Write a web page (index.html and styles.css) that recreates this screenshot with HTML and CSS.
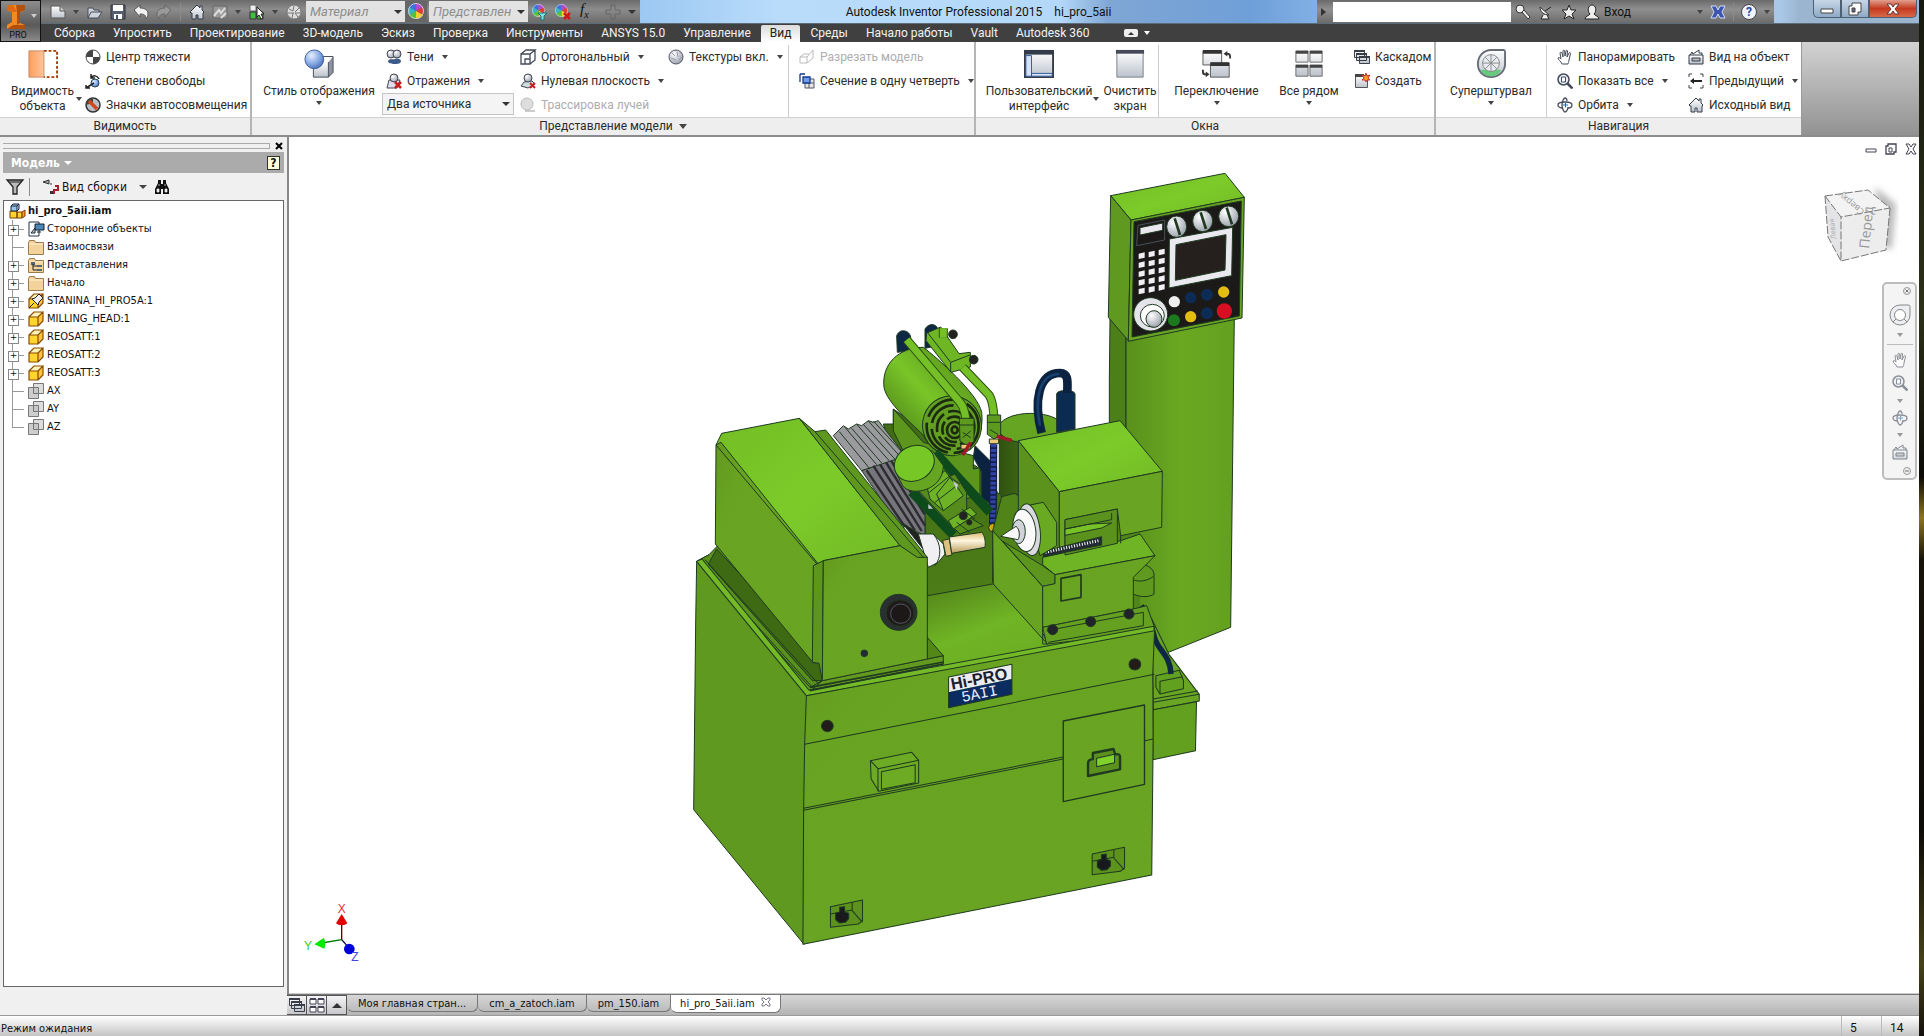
FILE: index.html
```html
<!DOCTYPE html>
<html lang="ru">
<head>
<meta charset="utf-8">
<title>Autodesk Inventor Professional 2015 - hi_pro_5aii</title>
<link rel="stylesheet" href="styles.css">
</head>
<body>
<svg class="defs" aria-hidden="true">
  <defs>
    <linearGradient id="steel" x1="0" y1="0" x2="0" y2="1"><stop offset="0" stop-color="#fff"/><stop offset="1" stop-color="#bcc2cc"/></linearGradient>
    <linearGradient id="orange"><stop offset="0" stop-color="#ff9d5c"/><stop offset="1" stop-color="#ffc59b"/></linearGradient>
    <radialGradient id="blueBall" cx=".35" cy=".3" r=".8"><stop offset="0" stop-color="#e4efff"/><stop offset=".6" stop-color="#7fa3e0"/><stop offset="1" stop-color="#3f66b0"/></radialGradient>
    <radialGradient id="greyBall" cx=".35" cy=".3" r=".8"><stop offset="0" stop-color="#fff"/><stop offset="1" stop-color="#9299a5"/></radialGradient>
    <symbol id="i-wheelcolor" viewBox="0 0 16 16"><path fill="#3d6fe0" d="M8 8 1 4A8 8 0 0 1 8 0z"/><path fill="#b04bd0" d="M8 8V0a8 8 0 0 1 7 4z"/><path fill="#e03a3a" d="m8 8 7-4a8 8 0 0 1 0 8z"/><path fill="#f2d22a" d="m8 8 7 4a8 8 0 0 1-7 4z"/><path fill="#54c23a" d="M8 8v8a8 8 0 0 1-7-4z"/><path fill="#35b7c9" d="m8 8-7 4a8 8 0 0 1 0-8z"/><circle cx="8" cy="8" r="7.500" fill="none" stroke="#ccc"/></symbol>
    <symbol id="i-house" viewBox="0 0 16 16"><path d="M1 8 8 1l3 3V2h2v4l2 2-1 1v6H9v-4H7v4H3V9H2z" fill="url(#steel)" stroke="#333a48"/></symbol>
    <symbol id="i-hand" viewBox="0 0 16 16"><path d="M5 15c-1-3-4-4-4-6 1-1 2 0 3 1L3 4c0-1 1.500-1 2 0l1 4V2c0-1 1.500-1 1.700 0L8 7l1-5c0-1 1.500-1 1.500 0L10 8l2-4c.5-1 1.700-.5 1.500.5L12 11c0 2-1 3-1 4z" fill="#fff" stroke="#444a57"/></symbol>
    <symbol id="i-lens" viewBox="0 0 16 16"><circle cx="6.500" cy="6.500" r="5.500" fill="#e9eef5" stroke="#444a57" stroke-width="1.500"/><path d="m10.500 10.500 5 5" stroke="#444a57" stroke-width="2.500"/><path d="M4.500 4h4v5h-4z" fill="#fff" stroke="#444a57"/></symbol>
    <symbol id="i-orbit" viewBox="0 0 16 16"><g fill="none" stroke="#444a57" stroke-width="1.300"><path d="M6 11c-3 0-5-1-5-3s3-3 7-3 7 1 7 3-2 3-4 3"/><path d="M10 4c0-2-1-3-2-3S5 4 5 8s2 7 3 7 3-2 3-5"/></g><path d="M6 8h5M8.500 5.500v5" stroke="#1f6fb5"/></symbol>
    <symbol id="i-lookat" viewBox="0 0 16 16"><path d="M1 6h14v9H1z" fill="url(#steel)" stroke="#333a48"/><path d="M4 9h8v3H4z" fill="#bbb" stroke="#333a48"/><path d="m2 6 2-3 1 2 6-4v3h3v2" fill="none" stroke="#333a48"/></symbol>
    <symbol id="i-cascade" viewBox="0 0 16 16"><g fill="url(#steel)" stroke="#3a3e48"><path d="M.5 1.500h10v7H.5zM2.500 4.500h10v7h-10zM5.500 7.500h10v7h-10z"/></g><path d="M0 1h11v2H0zM2 4h11v2H2zM5 7h11v2H5z" fill="#3a3e48"/></symbol>
    <symbol id="i-cube" viewBox="0 0 16 16"><path d="M1 6h9v9H1z" fill="#ffd52e"/><path d="m1 6 5-5h9l-5 5z" fill="#fff3b8"/><path d="m10 6 5-5v9l-5 5z" fill="#ffc23a"/><path d="M1 6h9v9H1zM1 6l5-5h9l-5 5M15 1v9l-5 5" fill="none" stroke="#8a4a00" stroke-width="1.200"/></symbol>
    <symbol id="i-folder" viewBox="0 0 16 16"><path d="M.5 15.500v-12l1-2h5l1 2h8v12z" fill="#f3d29b" stroke="#9b7a4c"/><path d="M1 5h14" stroke="#fff0d0"/></symbol>
    <symbol id="i-planes" viewBox="0 0 16 16"><path d="M5.500.5h10v10h-10z" fill="#ddd" stroke="#777"/><path d="M.5 4.500h10v11H.5z" fill="#c4c4c4" fill-opacity=".85" stroke="#777"/><path d="M5.500 4.500v6h5" fill="none" stroke="#777"/></symbol>
  </defs>
</svg>
<div class="desktop">
<div class="app">
  <header class="titlebar">
    <button class="appbtn" aria-label="Меню приложения">
      <svg class="logo" viewBox="0 0 20 26"><path fill="#f08a24" d="M1 1h18v5l-5 2v11l5 2v4H1v-4l5-3V8L1 6z"/><path fill="#b4500d" d="M10 1h9v5l-5 2v11l-3 2V8zM1 25l6-4 12 0v4z"/><path fill="#d96c13" d="M1 1h6l4 7H6L1 6z"/></svg>
      <span>PRO</span><i class="dn light"></i>
    </button>
    <div class="qat">
      <svg class="w16" viewBox="0 0 16 16"><path d="M1 2h9l5 5v7H1z" fill="url(#steel)" stroke="#555"/><path d="M10 2v5h5" fill="#ccc" stroke="#555"/></svg><i class="dn"></i>
      <svg class="w16" viewBox="0 0 16 16"><path d="M1 14V4h5l1 2h5v2M1 14l3-6h11l-4 6z" fill="#cfd3da" stroke="#444b58"/></svg>
      <svg class="w16" viewBox="0 0 16 16"><path d="M1 1h14v14H1z" fill="#566070" stroke="#333"/><path d="M3 1h10v6H3zM4 10h8v5H4z" fill="#fff"/><path d="M6 11h2v4H6z" fill="#456"/></svg>
      <svg class="w16" viewBox="0 0 16 16"><path d="m1 6 6-5v3c5 0 8 2 8 6 0 2-1 4-2 5 0-4-2-5-6-5v3z" fill="#f2f2f2" stroke="#555"/></svg>
      <svg class="w16" viewBox="0 0 16 16"><path d="M15 6 9 1v3c-5 0-8 2-8 6 0 2 1 4 2 5 0-4 2-5 6-5v3z" fill="#999" stroke="#666"/></svg>
      <b class="vs"></b>
      <svg class="w16"><use href="#i-house"/></svg>
      <svg class="w16" viewBox="0 0 16 16"><path d="M1 2h14v12H1z" fill="#999" stroke="#666"/><path d="m2 12 5-6 2 3 4-5M9 14l5-5" stroke="#ddd" stroke-width="2" fill="none"/></svg><i class="dn"></i>
      <svg class="w16" viewBox="0 0 16 16"><path d="M1 1h6v6H1z" fill="#eee" stroke="#666"/><path d="M1 8h6v7H1zM8 8h6v7H8z" fill="#3fbf3f" stroke="#333"/><path d="M8 3v10l2-2 2 4 2-1-2-4h3z" fill="#fff" stroke="#222"/></svg><i class="dn"></i>
      <svg class="w16" viewBox="0 0 16 16"><circle cx="8" cy="8" r="7" fill="#ddd" stroke="#777"/><path d="M3 5l4 2M8 2l-1 5M13 4l-4 4M2 9l6 0M6 14l1-5M12 13l-3-4M14 9H9" stroke="#777"/></svg>
      <label class="combo dim"><select aria-label="Материал"><option>Материал</option></select></label>
      <span class="wheelbox"><svg class="w16"><use href="#i-wheelcolor"/></svg></span>
      <label class="combo dim"><select aria-label="Представление"><option>Представлен</option></select></label>
      <svg class="w16" viewBox="0 0 16 16"><use href="#i-wheelcolor" width="13" height="13"/><path d="M6 9h9l-3 3v4H9v-4z" fill="#7fe0f5" stroke="#176"/></svg>
      <svg class="w16" viewBox="0 0 16 16"><use href="#i-wheelcolor" width="13" height="13"/><path d="m9 9 6 6m0-6-6 6" stroke="#d01818" stroke-width="2.500"/></svg>
      <span class="fx">f<sub>x</sub></span>
      <svg class="w16" viewBox="0 0 16 16"><path d="M6 1h4v5h5v4h-5v5H6v-5H1V6h5z" fill="none" stroke="#666"/></svg>
      <i class="dn over"></i>
    </div>
    <div class="caption"><span>Autodesk Inventor Professional 2015</span><span>hi_pro_5aii</span></div>
    <div class="infocenter">
      <i class="rt"></i><input class="search" type="text" aria-label="Поиск">
      <svg class="w16" viewBox="0 0 16 16"><circle cx="5" cy="5" r="4" fill="#eee" stroke="#333"/><path d="m7 8 6 7 2-2-6-7z" fill="#eee" stroke="#333"/></svg>
      <svg class="w16" viewBox="0 0 16 16"><path d="M2 3c0 5 4 8 9 8z" fill="#eee" stroke="#333"/><path d="m7 7 6-4M5 11l-2 4h8l-2-4" stroke="#222" fill="#eee"/></svg>
      <svg class="w16" viewBox="0 0 16 16"><path d="m8 1 2 5h5l-4 4 2 5-5-3-5 3 2-5-4-4h5z" fill="#eee" stroke="#222"/></svg>
      <svg class="w16" viewBox="0 0 16 16"><path d="M1 15c0-3 4-3 5-5-3-3-2-9 2-9s5 6 2 9c1 2 5 2 5 5z" fill="#eee" stroke="#222"/></svg>
      <a href="#" class="signin">Вход</a><i class="dn signdn"></i>
      <svg class="w16" viewBox="0 0 16 16"><path d="M1 2h5l2 4 2-4h5l-3 6 3 6h-5l-2-4-2 4H1l3-6z" fill="#3b55b0" stroke="#d5dcf5"/></svg>
      <b class="vs"></b>
      <button class="help" aria-label="Справка">?</button><i class="dn"></i>
    </div>
    <div class="winbtns"><button aria-label="Свернуть"><svg class="w16" viewBox="0 0 16 16"><path d="M2 8h12v4H2z" fill="#fff" stroke="#444"/></svg></button><button aria-label="Развернуть"><svg class="w16" viewBox="0 0 16 16"><path d="M5 2h9v9h-3v3H2V5h3z" fill="#fff" stroke="#444"/><path d="M5 7h3v4H5z" fill="#668" stroke="#444"/></svg></button><button class="close" aria-label="Закрыть"><svg class="w16" viewBox="0 0 16 16"><path d="M2 3h4l2 3 2-3h4l-4 5 4 5h-4l-2-3-2 3H2l4-5z" fill="#fff" stroke="#633"/></svg></button></div>
  </header>

  <nav class="tabs">
    <a href="#">Сборка</a><a href="#">Упростить</a><a href="#">Проектирование</a><a href="#">3D-модель</a><a href="#">Эскиз</a><a href="#">Проверка</a><a href="#">Инструменты</a><a href="#">ANSYS 15.0</a><a href="#">Управление</a><a href="#" class="on">Вид</a><a href="#">Среды</a><a href="#">Начало работы</a><a href="#">Vault</a><a href="#">Autodesk 360</a>
    <button class="mini" aria-label="Свернуть ленту"><i class="up"></i></button><i class="dn white"></i>
  </nav>

  <section class="ribbon">
    <div class="panel p1">
      <div class="tools">
        <button class="big"><svg class="w32" viewBox="0 0 32 32"><path d="M1 2h16v28H1z" fill="url(#orange)"/><path d="M1 2h16v28H1z" fill="none" stroke="#c98a63"/><path d="M17 2h14v28H17" fill="none" stroke="#a33b0c" stroke-width="2" stroke-dasharray="3 2"/></svg><span>Видимость<br>объекта</span><i class="dn side"></i></button>
        <div class="col">
          <button><svg class="w16" viewBox="0 0 16 16"><circle cx="8" cy="8" r="7" fill="#fff" stroke="#444"/><path d="M8 8V1a7 7 0 0 0-7 7zM8 8v7a7 7 0 0 0 7-7z" fill="#444"/></svg>Центр тяжести</button>
          <button><svg class="w16" viewBox="0 0 16 16"><circle cx="10" cy="10" r="4" fill="url(#blueBall)" stroke="#245"/><path d="M1 15l8-5M6 5c2-3 6-3 8 1M6 1v4h4M1 12v3h4" fill="none" stroke="#222" stroke-width="1.500"/></svg>Степени свободы</button>
          <button><svg class="w16" viewBox="0 0 16 16"><circle cx="8" cy="8" r="7" fill="#b9c0ca" stroke="#333" stroke-width="1.500"/><path d="M8 1a7 7 0 0 0-7 7l7-2z" fill="#444"/><path d="m4 4 8 8" stroke="#d1481a" stroke-width="3.500"/></svg>Значки автосовмещения</button>
        </div>
      </div>
      <h2>Видимость</h2>
    </div>

    <div class="panel p2">
      <div class="tools">
        <button class="big"><svg class="w32" viewBox="0 0 32 32"><path d="M10 14h16v16H10z" fill="url(#steel)"/><path d="m26 14 5-6v17l-5 5z" fill="#8d939f"/><path d="M10 14v16h16l5-5V8H20M26 14v16" fill="none" stroke="#444a57"/><circle cx="11" cy="11" r="10" fill="url(#blueBall)" stroke="#3a5a9a"/></svg><span>Стиль отображения</span><i class="dn"></i></button>
        <div class="col c2">
          <button><svg class="w16" viewBox="0 0 16 16"><circle cx="5" cy="5" r="4" fill="url(#greyBall)" stroke="#445"/><circle cx="11" cy="5" r="4" fill="url(#greyBall)" stroke="#445"/><path d="M2 12c2-3 5-1 7-2s6 0 6 2-2 3-5 3-8 0-8-3z" fill="#3b5a8a"/></svg>Тени<i class="dn"></i></button>
          <button><svg class="w16" viewBox="0 0 16 16"><path d="m3 7-2 8h10l3-8z" fill="#dde" stroke="#445"/><circle cx="8" cy="5" r="4" fill="url(#greyBall)" stroke="#445"/><path d="m9 9 6 6m0-6-6 6" stroke="#c81e1e" stroke-width="2.500"/></svg>Отражения<i class="dn"></i></button>
          <label class="combo lights"><select aria-label="Источники света"><option>Два источника</option></select></label>
        </div>
        <div class="col c3">
          <button><svg class="w16" viewBox="0 0 16 16"><path d="M1 5h9v10H1zM1 5l5-4h9l-5 4M15 1v10l-5 4M5 15v-5h5" fill="none" stroke="#444a57" stroke-width="1.300"/></svg>Ортогональный<i class="dn"></i></button>
          <button><svg class="w16" viewBox="0 0 16 16"><path d="m4 9-3 4 7 2 7-4-3-3z" fill="#cdd" stroke="#445"/><circle cx="8" cy="5" r="4" fill="url(#greyBall)" stroke="#445"/><path d="m10 10 5 5m0-5-5 5" stroke="#c81e1e" stroke-width="2"/></svg>Нулевая плоскость<i class="dn"></i></button>
          <button disabled><svg class="w16" viewBox="0 0 16 16"><path d="M5 13h10v2H5z" fill="#ccc"/><circle cx="7" cy="7" r="6" fill="#ddd" stroke="#bbb"/></svg>Трассировка лучей</button>
        </div>
        <div class="col">
          <button><svg class="w16" viewBox="0 0 16 16"><circle cx="8" cy="8" r="7" fill="url(#greyBall)" stroke="#556"/><path d="m4 4 3 3M9 3l1 5M3 9l5 2M11 11l2-3" stroke="#99a"/></svg>Текстуры вкл.<i class="dn"></i></button>
        </div>
        <div class="col c5">
          <button disabled><svg class="w16" viewBox="0 0 16 16"><path d="M1 8h7v6H1zM1 8l4-3h5M8 8l6-7v8l-6 5" fill="none" stroke="#bbb"/></svg>Разрезать модель</button>
          <button><svg class="w16" viewBox="0 0 16 16"><path d="M6 6h9v9H6zM10 6v9M6 10h9" fill="#e6e6e6" stroke="#556"/><path d="M1 1h5M1 1v8M4 4h7v6H4z" fill="#6f9be8" stroke="#133a8a" stroke-width="1.300"/></svg>Сечение в одну четверть<i class="dn"></i></button>
        </div>
      </div>
      <h2>Представление модели<i class="dn big-dn"></i></h2>
    </div>

    <div class="panel p3">
      <div class="tools">
        <button class="big"><svg class="w32" viewBox="0 0 32 32"><path d="M1 2h30v28H1z" fill="url(#steel)" stroke="#333a48" stroke-width="2"/><path d="M1 1h30v5H1z" fill="#333a48"/><path d="M2 7h6v22H2zM8 26h22v3H8z" fill="#d6e2f5" stroke="#2d5597"/></svg><span>Пользовательский<br>интерфейс</span><i class="dn side"></i></button>
        <button class="big"><svg class="w32" viewBox="0 0 32 32"><path d="M2 2h28v28H2z" fill="url(#steel)" stroke="#777d88"/><path d="M1 1h30v4H1z" fill="#444a57"/></svg><span>Очистить<br>экран</span></button>
        <button class="big sep"><svg class="w32" viewBox="0 0 32 32"><g fill="url(#steel)" stroke="#555"><path d="M1 2h20v15H1zM9 15h20v15H9z"/></g><path d="M1 1h20v4H1zM9 14h20v4H9zM23 5l4-3v2c4 0 4 3 4 6h-2c0-3 0-4-2-4v2zM8 27l-4-3v2c-2 0-2-1-2-4H0c0 4 0 6 4 6v2z" fill="#333"/></svg><span>Переключение</span><i class="dn"></i></button>
        <button class="big"><svg class="w32" viewBox="0 0 32 32"><g fill="url(#steel)" stroke="#666"><path d="M2 2h13v12H2zM17 2h13v12H17zM2 17h13v12H2zM17 17h13v12H17z"/></g><path d="M2 2h13v3H2zM17 2h13v3H17zM2 17h13v3H2zM17 17h13v3H17z" fill="#444"/></svg><span>Все рядом</span><i class="dn"></i></button>
        <div class="col cw">
          <button><svg class="w16"><use href="#i-cascade"/></svg>Каскадом</button>
          <button><svg class="w16" viewBox="0 0 16 16"><path d="M1.500 2.500h12v12h-12z" fill="url(#steel)" stroke="#555"/><path d="M1 1h9v3H1z" fill="#444"/><path d="m12 0 1 3 3-1-2 3 2 2-3 0-1 2-1-2-3 0 2-2-2-3 3 1z" fill="#f0a020" stroke="#c33"/></svg>Создать</button>
        </div>
      </div>
      <h2>Окна</h2>
    </div>

    <div class="panel p4">
      <div class="tools">
        <button class="big"><svg class="w32" viewBox="0 0 32 32"><path d="M16 1h13c2 0 2 1 2 3v12c0 8-7 14-15 14S2 24 2 16 8 1 16 1z" fill="url(#steel)" stroke="#666b75" stroke-width="2"/><path d="M5 22h22c-3 5-6 7-11 7s-9-2-11-7z" fill="#66c97e"/><circle cx="16" cy="15" r="9" fill="#e8ebf0" stroke="#888"/><path d="M16 6v18M7 15h18M10 9l12 12M22 9 10 21" stroke="#888"/></svg><span>Суперштурвал</span><i class="dn"></i></button>
        <div class="col n1">
          <button><svg class="w16"><use href="#i-hand"/></svg>Панорамировать</button>
          <button><svg class="w16"><use href="#i-lens"/></svg>Показать все<i class="dn"></i></button>
          <button><svg class="w16"><use href="#i-orbit"/></svg>Орбита<i class="dn"></i></button>
        </div>
        <div class="col">
          <button><svg class="w16"><use href="#i-lookat"/></svg>Вид на объект</button>
          <button><svg class="w16" viewBox="0 0 16 16"><path d="M1 4V1h3M12 1h3v3M15 12v3h-3M4 15H1v-3" fill="none" stroke="#444"/><path d="m2 8 4-3v2h8v2H6v2z" fill="#222"/></svg>Предыдущий<i class="dn"></i></button>
          <button><svg class="w16"><use href="#i-house"/></svg>Исходный вид</button>
        </div>
      </div>
      <h2>Навигация</h2>
    </div>
    <div class="rest"></div>
  </section>

  <main class="work">
    <aside class="browser">
      <div class="grip"><i></i><button aria-label="Закрыть панель"><svg viewBox="0 0 8 8"><path d="m1 1 6 6m0-6-6 6" stroke="#000" stroke-width="2"/></svg></button></div>
      <div class="bhead"><span>Модель</span><i class="dn white wide"></i><button class="qm" aria-label="Справка">?</button></div>
      <div class="btools">
        <svg class="w16" viewBox="0 0 16 16"><path d="M0 1h16l-6 7v7H6V8z" fill="#bbb" stroke="#222" stroke-width="1.300"/><path d="M2 3h12" stroke="#222"/></svg><b class="vs"></b>
        <svg class="w16" viewBox="0 0 16 16"><path d="m0 3 6-2v4zM8 4v2" fill="#aaa" stroke="#333"/><path d="M8 14h3v-3h4V7h-3" fill="none" stroke="#a3202c" stroke-width="2"/><path d="M7 12h3v3H7z" fill="#333"/></svg>
        <span class="vname">Вид сборки</span><i class="dn wide"></i>
        <svg class="w16" viewBox="0 0 16 16"><path d="M4 1h3v4h2V1h3v3l3 6v5H9v-5H7v5H1v-5l3-6z" fill="#111"/><path d="M3 10h2v3H3zM11 10h2v3h-2zM5 5v2M11 5v2" fill="#eee" stroke="#eee" stroke-width=".7"/></svg>
      </div>
      <ul class="tree">
        <li class="root"><svg class="w16" viewBox="0 0 16 16"><path d="M1 8h7v7H1zM8 9h5v6H8z" fill="#ffd52e" stroke="#7a3c00"/><path d="m13 9 3-2v6l-3 2z" fill="#ff9a1c" stroke="#7a3c00"/><path d="M2 3h6v5H2zM2 3l2-2h6L8 3M10 1v5L8 8" fill="#9dc3e8" stroke="#14263f"/></svg>hi_pro_5aii.iam</li>
        <li class="plus"><svg class="w16" viewBox="0 0 16 16"><path d="M1 1h10v14H1z" fill="#fff" stroke="#234"/><path d="M7 3h9v6H7z" fill="#4f86b5" stroke="#123"/><path d="m3 12 4-5v5zM9 11h4" fill="#ccc" stroke="#123"/></svg>Сторонние объекты</li>
        <li><svg class="w16"><use href="#i-folder"/></svg>Взаимосвязи</li>
        <li class="plus"><svg class="w16" viewBox="0 0 16 16"><use href="#i-folder" width="16" height="16"/><path d="M3 5h4v3H3zM9 8h5v2H9zM9 12h5v2H9z" fill="#567"/><path d="M5 7v6h4M5 9h4" fill="none" stroke="#222"/></svg>Представления</li>
        <li class="plus"><svg class="w16"><use href="#i-folder"/></svg>Начало</li>
        <li class="plus"><svg class="w16" viewBox="0 0 16 16"><use href="#i-cube" width="16" height="16"/><path d="m1 15 5-5M4 6l6 6 1-3 4-4-4-4-4 4z" fill="#eee" stroke="#222"/></svg>STANINA_HI_PRO5A:1</li>
        <li class="plus"><svg class="w16"><use href="#i-cube"/></svg>MILLING_HEAD:1</li>
        <li class="plus"><svg class="w16"><use href="#i-cube"/></svg>REOSATT:1</li>
        <li class="plus"><svg class="w16"><use href="#i-cube"/></svg>REOSATT:2</li>
        <li class="plus"><svg class="w16"><use href="#i-cube"/></svg>REOSATT:3</li>
        <li><svg class="w16"><use href="#i-planes"/></svg>AX</li>
        <li><svg class="w16"><use href="#i-planes"/></svg>AY</li>
        <li class="last"><svg class="w16"><use href="#i-planes"/></svg>AZ</li>
      </ul>
    </aside>

    <section class="doc">
      <div class="canvas">
        <svg class="model" viewBox="867 417 4890 2562" preserveAspectRatio="xMidYMid meet" role="img" aria-label="Станок HI-PRO 5AII">
          <defs>
            <linearGradient id="gTop" x1="0" y1="0" x2="1" y2="1"><stop offset="0" stop-color="#72bd25"/><stop offset=".5" stop-color="#7ccb29"/><stop offset="1" stop-color="#72b926"/></linearGradient>
            <linearGradient id="gFront" x1="0" y1="0" x2="1" y2="1"><stop offset="0" stop-color="#63991f"/><stop offset=".2" stop-color="#68a321"/><stop offset="1" stop-color="#69a522"/></linearGradient>
            <linearGradient id="gCol"><stop offset="0" stop-color="#58901c"/><stop offset=".5" stop-color="#6aa821"/><stop offset="1" stop-color="#64a020"/></linearGradient>
            <linearGradient id="gDark" x1="0" y1="0" x2="0" y2="1"><stop offset="0" stop-color="#3f6a14"/><stop offset="1" stop-color="#4d7d18"/></linearGradient>
            <linearGradient id="gFloor" x1="0" y1="0" x2="1" y2="1"><stop offset="0" stop-color="#4f7e19"/><stop offset=".4" stop-color="#70b525"/><stop offset="1" stop-color="#68a522"/></linearGradient>
            <linearGradient id="gMotor" x1="0" y1="1" x2="1" y2="0"><stop offset=".15" stop-color="#4f8518"/><stop offset=".5" stop-color="#79c528"/><stop offset=".9" stop-color="#528a1a"/></linearGradient>
            <linearGradient id="gWork" x1="0" y1="0" x2="0" y2="1"><stop offset="0" stop-color="#d9b96f"/><stop offset=".4" stop-color="#fff6df"/><stop offset="1" stop-color="#b79a5a"/></linearGradient>
            <linearGradient id="gTank"><stop offset="0" stop-color="#2f5210"/><stop offset=".6" stop-color="#477617"/><stop offset="1" stop-color="#3c6613"/></linearGradient>
          </defs>
          <!-- electrical column -->
          <g transform="translate(2040 930)" class="ln">
            <path fill="#4d7f19" d="M1290 30l48 45v280l-50-15V210z"/>
            <path fill="url(#gCol)" d="M1338 85l325-65-11 935-192 77-110-30-12-400z"/>
          </g>
          <!-- control head -->
          <g transform="translate(3240 480)" class="ln">
            <path fill="url(#gTop)" d="M92 110 435 43l58 72-340 68z"/>
            <path fill="#5f991f" d="M92 110l61 73-8 362-60-70z"/>
            <path fill="#69a522" d="M153 183l340-68-7 362-341 70z"/>
            <path fill="#1c1a18" d="M162 188l322-62-6 345-322 63z"/>
            <path fill="none" stroke="#4a5058" d="M174 199l80-16v60l-84 17z"/><path fill="#e8e8ee" d="M180 206l68-14v22l-68 14z"/>
            <g fill="url(#greyBall)"><ellipse cx="290" cy="203" rx="30" ry="32"/><ellipse cx="368" cy="186" rx="30" ry="32"/><ellipse cx="446" cy="172" rx="30" ry="31"/></g>
            <path d="M284 178l16 50M362 160l16 50M440 146l16 50" stroke-width="8"/>
            <path fill="#e9e9ef" d="M268 240l190-35-3 145-188 37z"/><path fill="#25201e" d="M288 257l150-30-3 106-149 31z"/>
            <g stroke="none" fill="#f0f0f4">
              <path d="M176 284l18-4v16l-18 4zM206 279l18-4v16l-18 4zM236 273l18-4v16l-18 4zM176 311l18-4v16l-18 4zM206 306l18-4v16l-18 4zM236 300l18-4v16l-18 4zM176 338l18-4v16l-18 4zM206 332l18-4v16l-18 4zM236 327l18-4v16l-18 4zM176 364l18-4v16l-18 4zM206 359l18-4v16l-18 4zM236 353l18-4v16l-18 4zM176 390l18-4v16l-18 4zM206 385l18-4v16l-18 4zM236 379l18-4v16l-18 4z"/>
            </g>
            <g stroke="none"><circle cx="283" cy="428" r="17" fill="#eee"/><circle cx="332" cy="416" r="17" fill="#0c2c56"/><circle cx="381" cy="407" r="18" fill="#0c2c56"/><circle cx="431" cy="399" r="17" fill="#e3bd10"/><circle cx="282" cy="484" r="18" fill="#1b7a1e"/><circle cx="332" cy="473" r="17" fill="#e3bd10"/><circle cx="381" cy="463" r="18" fill="#0c2c56"/><circle cx="433" cy="456" r="23" fill="#d80f22"/></g>
            <ellipse cx="212" cy="466" rx="51" ry="50" fill="#e4e4ea"/><ellipse cx="217" cy="470" rx="36" ry="34" fill="#fff"/><ellipse cx="222" cy="480" rx="24" ry="25" fill="url(#greyBall)"/>
          </g>
          <!-- coolant tank and cabinet -->
          <g transform="translate(2040 1920) scale(1.033 1)" class="ln">
            <path fill="#69a522" d="M1370-60l50 106 88 120v20l-133 26z"/>
            <path fill="#64a020" d="M1374 212l126-24-3 147-124 27z"/><path fill="none" d="M1374 190l134-24M1374 180l130-24"/>
            <path fill="#62a01f" d="M1382 110l68-16 12 30v25l-68 16-12-20z"/><path fill="none" d="M1394 165v-38l66-14"/>
            <path fill="none" stroke="#0d2745" stroke-width="16" d="M1340-100c18 30 25 45 38 95 10 40 45 50 48 110"/>
          </g>
          <g transform="translate(2040 930)" class="ln">
            <path fill="#5f991f" d="M50 757l37-20 340 380-10 45-45 744L41 1502l6-560z"/>
            <path fill="url(#gFloor)" d="M740 850l205-30 165 180 300-50v30l-620 95-60-60z"/>
            <!-- rear walls -->
            <path fill="url(#gDark)" d="M610 345h30v-45l260 180 60 80 60 40v240l-82-15-195 35-10-260-110-215z"/>
            <path fill="#5c961d" d="M640 300l90 100 150 40v40l20-4v80l-60 20-160-130-40-80z"/>
            <path fill="none" d="M938 665v155"/>
            <!-- rear tank and hose -->
            <path fill="url(#gTank)" d="M958 355h190v240H1000l-42-40z"/><ellipse cx="1053" cy="358" rx="98" ry="45" fill="#66a522"/>
            <path fill="#0c2b50" d="M1130 255c0-14 55-14 55 0v105l-55 10z"/>
            <path fill="none" stroke="#0b2240" stroke-width="26" d="M1085 372c-25-95-10-180 55-180 28 0 22 30 22 60"/>
            <path fill="none" stroke="#16406f" stroke-width="8" d="M1080 350c-18-85 0-155 58-155"/>
            <path fill="#0b2240" d="M885 410l65 65v125l-45-35v-75l-25-45z"/>
            <!-- bellows -->
            <path fill="#9a9a9f" d="M460 380l30-30 15 10 25-15 15 5 20-15 15 5 15-5 85 110-135 40z"/>
            <path fill="#75757b" d="M545 485l135-45 55 110v130l-85-40z"/>
            <path fill="none" d="M478 368l92 112M495 355l95 112M515 358l90 104M530 346l100 112M550 346l98 108M565 336l100 112M580 336l100 108"/>
            <path fill="none" stroke-width="7" stroke="#2b2b30" d="M560 484l115 170M580 470l125 195M600 466l125 200M618 460l117 190M634 456l100 160M650 450l84 130"/>
            <!-- pump motor -->
            <g><path fill="#0d2745" d="M650 80c10-25 40-15 42 5v40l-40 5zM735 60c12-20 35-15 38 0v50l-38 8z"/>
            <path fill="url(#gMotor)" d="M612 235c-8-70 45-120 118-120 40 30 165 140 175 195 10 85-45 130-105 128-30-5-60-35-70-60C690 340 620 280 612 235z"/>
            <ellipse cx="816" cy="350" rx="88" ry="90" fill="#63a021" transform="rotate(-25 816 350)"/>
            <g fill="none" stroke="#1c2a12" stroke-width="8"><ellipse cx="818" cy="352" rx="78" ry="80" stroke-dasharray="120 18"/><ellipse cx="819" cy="355" rx="64" ry="66" stroke-dasharray="90 18"/><ellipse cx="821" cy="358" rx="50" ry="52" stroke-dasharray="60 14"/><ellipse cx="823" cy="361" rx="36" ry="38" stroke-dasharray="40 10"/><ellipse cx="824" cy="363" rx="23" ry="24"/><ellipse cx="824" cy="363" rx="9" ry="10"/></g></g>
            <path class="pipeo" d="M680 92 840 280q18 20 20 80"/><path class="pipei" d="M680 92 840 280q18 20 20 80"/>
            <path fill="#6fb624" d="M740 72l42-18 55 80 34-4v44l-58 16-75-95z"/><path fill="none" d="M812 160l58-22M812 160v28M812 160l-70-90"/>
            <path class="pipeo" d="M790 58v28M848 175l78 82q16 20 17 100"/><path class="pipei" d="M790 58v28M848 175l78 82q16 20 17 100"/>
            <circle cx="819" cy="76" r="13" fill="#222"/><circle cx="881" cy="152" r="13" fill="#222"/>
            <path fill="#5d9a1e" d="M838 328h44v70l-22 12-20-14zM922 318h40v60l-20 12-20-14z"/><path fill="none" d="M922 340h40M838 348h44M848 370l24 16m0-20-24 20M930 362l24 14"/>
            <path fill="#f0c878" d="M843 406h28v14h-28zM928 390h28v14h-28z"/>
            <path stroke="#a11828" stroke-width="10" d="M950 382l45 12M872 400l-24 38"/>
            <path stroke="#141d4f" stroke-width="22" d="M941 406l-3 240"/><path stroke="#3044a4" stroke-width="16" stroke-dasharray="9 5" d="M941 406l-3 240"/>
            <!-- milling head -->
            <path stroke="#0d4a1c" stroke-width="28" d="M765 430l165 180M695 548l125 130"/>
            <path fill="#558c1c" d="M715 545l110-50 35 55v70l50 30-70 25-20-20z"/>
            <path fill="#6db325" d="M740 530l55-45 55 75-60 45-40-35zM805 635l65-40 20 20-70 45z"/><path fill="none" d="M748 550l62-50M765 580l65-50M790 605l-20-50 40-50 30 20M830 640l40 30M845 600l40 30"/>
            <path fill="#66a521" d="M644 482l24 48c25 35 122 15 122-60l-33-45z"/>
            <ellipse cx="703" cy="463" rx="62" ry="52" fill="#77c827" transform="rotate(-28 703 463)"/>
            <path stroke="none" fill="#c8ccd8" d="M818 515l16 12-4 16zM745 585l14 14h-14z"/>
            <circle cx="850" cy="620" r="12" fill="#222"/><circle cx="868" cy="640" r="8" fill="#222"/>
            <circle cx="938" cy="656" r="12" fill="#d8a80c"/>
            <!-- chuck and workpiece -->
            <path fill="#222" d="M665 640l60 40 20 60z"/>
            <path fill="#f0f0f3" d="M715 675h45l30 30 5 30-20 25-30 15z"/><path fill="none" d="M760 675c25 30 25 70 5 95"/>
            <path fill="#dcc080" d="M788 694l20-4 8 48-18 4z"/>
            <path fill="url(#gWork)" d="M808 684l97-14c10 10 12 30 10 45l-100 18z"/>
            <!-- tailstock -->
            <path fill="#508419" d="M965 563l40-10 130 100v110l-47 70-150-167z"/>
            <path fill="#68a321" d="M938 665l150 167v138l15 36L940 825z"/>
            <path fill="#5b931d" d="M1015 395l123 153v190L1015 610z"/>
            <path fill="url(#gTop)" d="M1015 395l305-60 127 152-309 61z"/>
            <path fill="#4f8519" stroke="none" d="M1290 600l90 60v280h-90z"/>
            <path fill="#5f9a1e" d="M1350 770c25-15 70 0 72 25v60c-15 12-50 10-72-5z"/><path fill="none" d="M1355 810c20 12 50 5 65-8"/>
            <path fill="#6fb424" d="M1088 745l234-50 58-20 45 65-300 57-37-30z"/>
            <path fill="#69a522" d="M1138 548l309-61-2 168-123 25-10-80-157 32v95h-17z"/>
            <path fill="#5b921d" d="M1155 632l157-32v103l-157 35z"/><path fill="#78c228" d="M1155 660l75-15 65-3-30 15-110 22z"/><path fill="none" d="M1295 612v20l-140 28M1322 680v23"/>
            <path fill="#222a33" d="M1090 727l175-44v25l-175 35z"/><path stroke="#fff" stroke-width="9" stroke-dasharray="3 5" d="M1096 730l164-36"/>
            <path fill="#5d961e" d="M1088 770l37 27v28l-37 7-120-135z"/>
            <path fill="url(#gFront)" d="M1125 797l300-57-65 65v95l-272 55V832l37-8z"/>
            <path fill="none" stroke-width="5" d="M1143 808l60-11v68l-60 11z"/>
            <path fill="#65a020" d="M1088 955l272-55 40-10 22 60v20l-322 35z"/><path fill="none" d="M1100 965l290-55v40l-285 50M1088 955v50h14"/>
            <g fill="#20242a"><circle cx="1118" cy="962" r="15"/><circle cx="1232" cy="938" r="15"/><circle cx="1347" cy="915" r="15"/></g>
            <path fill="#6aaa22" d="M1040 590l50-10 40 60v70l-50 30z"/>
            <ellipse cx="1048" cy="662" rx="32" ry="78" fill="#d8d8de" transform="rotate(-8 1048 662)"/><ellipse cx="1033" cy="664" rx="34" ry="64" fill="#fafafa" transform="rotate(-8 1033 664)"/><ellipse cx="1016" cy="668" rx="20" ry="36" fill="#d2d2da"/>
            <path fill="#f8f8f8" d="M962 682l46-30c12 8 12 32 6 40z"/>
            <!-- headstock -->
            <path fill="#5a911d" d="M50 757l37-20 31-32 309 345v65l-37 20z"/><path fill="#3f6a14" d="M85 765l25-45 317 340v55h-30z"/><path fill="none" d="M60 760l340 378M75 752l340 372"/>
            <path fill="#63991f" d="M427 1115l363-75v25l-395 78z"/><path fill="#538819" d="M742 985l48 55-48 10z"/>
            <path fill="url(#gTop)" d="M125 373l233-45 302 382-230 45-15 13L108 408z"/>
            <path fill="#5e981e" d="M358 328l47 40 32-5 305 382-30 5-52-40z"/><path fill="none" d="M405 368l325 377"/>
            <path fill="url(#gFront)" d="M108 408l15-8 292 365-2 295-13 2L106 705z"/><path fill="none" d="M108 408l305 360"/>
            <path fill="#5c961d" d="M400 770l30-15-3 360-10-52-20-3z"/>
            <path fill="url(#gFront)" d="M430 755l230-45 52 35h30v305l-315 65z"/>
            <ellipse cx="656" cy="910" rx="55" ry="54" fill="#2a3032"/><ellipse cx="660" cy="912" rx="42" ry="40" fill="#201c1a"/><ellipse cx="662" cy="914" rx="30" ry="29" fill="#1b1817" stroke="#556"/>
            <circle cx="553" cy="1033" r="10" fill="#222b35"/>
          </g>
          <!-- base front -->
          <g transform="translate(2040 1920) scale(1.033 1)" class="ln">
            <path fill="#74ba26" d="M48-233l319 403 1011-190-2-18L374 153 64-240z"/>
            <path fill="none" stroke-width="5" d="M377 145l388-76M377 155l388-80"/>
            <path fill="url(#gFront)" d="M367 170l1011-195-5 130 1 205-4 398L357 916l2-405 3-196z"/>
            <path fill="none" d="M362 316l1016-210M359 514l754-154M359 508l754-154M1350 305l24-5"/>
            <ellipse cx="428" cy="261" rx="17" ry="17" fill="#221d1b"/><ellipse cx="1321" cy="76" rx="17" ry="17" fill="#221d1b"/>
            <path fill="#ececf0" stroke="none" d="M780 114l184-38v44l-184 40z"/><path fill="#0a2c60" stroke="none" d="M780 160l184-40v46l-184 40z"/><path fill="none" d="M780 114l184-38v90l-184 40z"/>
            <path fill="#6cab23" d="M553 365l120-25 20 24v68l-116 25-22-38z"/><path fill="none" d="M553 365l22 24 118-25M575 389v68M585 398l98-21v54l-98 20z"/>
            <path fill="#69a522" stroke-width="4" d="M1113 246l236-48v238l-236 52z"/>
            <path fill="#5c911d" stroke-width="7" d="M1185 372q0-10 14-12v-18l60-12 5 16q14-3 14 8v37l-93 20z"/><path fill="#80d12a" d="M1210 358l52-12v25l-52 12z"/>
            <path fill="#5d921d" d="M437 803l93-20v62l-12 10-81 10zM1197 645l94-20v62l-12 10-82 10z"/><path fill="none" d="M500 790v25l30 35M437 825l63-12M1260 632v25l30 35M1197 667l63-12"/>
            <path fill="#17191d" d="M452 823l12-4v-14l14-2v16l12 4v16l-10 11-16 2-12-10zM1212 665l12-4v-14l14-2v16l12 4v16l-10 11-16 2-12-10z"/>
          </g>
          <g transform="translate(2856 2072) rotate(-11)" class="plate"><text x="0" y="0">Hi-PRO</text><text x="24" y="42" class="two">5AII</text></g>
          <!-- coordinate triad -->
          <g transform="translate(810 2640)">
            <path stroke="#600" stroke-width="4" d="M215 182v-60"/><path stroke="#070" stroke-width="4" d="m215 182-60 10"/><path stroke="#004" stroke-width="4" d="m215 182 18 20"/>
            <path fill="#e00000" d="M215 105l17 28c-8 8-26 8-34 0z"/><path fill="#00ea00" d="M133 196l28-19c6 8 6 24 2 32z"/><circle cx="238" cy="210" r="16" fill="#0000d8"/>
            <text class="ax" x="203" y="102" fill="#e33">X</text><text class="ax" x="102" y="213" fill="#3c3">Y</text><text class="ax" x="244" y="246" fill="#44d">Z</text>
          </g>
        </svg>
        <div class="docbtns"><button aria-label="Свернуть документ"><svg viewBox="0 0 12 12"><path d="M1 6h10v3H1z" fill="#fff" stroke="#445"/></svg></button><button aria-label="Восстановить документ"><svg viewBox="0 0 12 12"><path d="M3 1h8v8H9v2H1V3h2z" fill="#fff" stroke="#445" stroke-width="1.300"/><path d="M4 5h3v4H4z" fill="none" stroke="#445"/></svg></button><button aria-label="Закрыть документ"><svg viewBox="0 0 12 12"><path d="M1 1h3l2 3 2-3h3L8 6l3 5H8L6 8l-2 3H1l3-5z" fill="#fff" stroke="#445"/></svg></button></div>
        <svg class="viewcube" viewBox="0 0 80 84">
          <defs><filter id="soft"><feGaussianBlur stdDeviation="3"/></filter></defs>
          <path d="M50 4 71 21 67 66 58 64z" fill="#bbb" filter="url(#soft)"/>
          <path d="M0 13 43 7 65 25 16 34z" fill="#f3f3f3"/><path d="M0 13 16 34v44L3 54z" fill="#e4e4e6"/><path d="M16 34 65 25l-4 42-45 11z" fill="#ededee"/>
          <path d="M0 13 43 7 65 25 16 34zM0 13 3 54l13 24V34M65 25l-4 42-45 11" fill="none" stroke="#777" stroke-dasharray="8 2"/>
          <text transform="translate(44 66) rotate(-84)" class="cubeT">Перед</text><text transform="translate(40 28) rotate(-140)" class="cubeS">Сверху</text><text transform="translate(11 56) rotate(-96)" class="cubeX">Левая</text>
        </svg>
        <div class="navbar">
          <svg class="tiny end" viewBox="0 0 8 8"><circle cx="4" cy="4" r="3.500" fill="#eee" stroke="#999"/><path d="m2.500 2.500 3 3m0-3-3 3" stroke="#777"/></svg>
          <svg class="wheel" viewBox="0 0 22 22"><path d="M11 1h8c2 0 2 1 2 2v8a10 10 0 1 1-10-10z" fill="#eceef2" stroke="#888"/><circle cx="11" cy="11" r="5.500" fill="#fff" stroke="#888"/><path d="m4 18 3-3m11 3-3-3" stroke="#888"/></svg>
          <i class="dn pale"></i><hr>
          <svg class="w16"><use href="#i-hand"/></svg>
          <svg class="w16"><use href="#i-lens"/></svg><i class="dn pale"></i>
          <svg class="w16"><use href="#i-orbit"/></svg><i class="dn pale"></i>
          <svg class="w16"><use href="#i-lookat"/></svg>
          <svg class="tiny end" viewBox="0 0 8 8"><circle cx="4" cy="4" r="3.500" fill="#eee" stroke="#999"/><path d="M2 4h4" stroke="#777"/></svg>
        </div>
      </div>
      <div class="doctabs">
        <button class="sq" aria-label="Каскадом"><svg class="w16"><use href="#i-cascade"/></svg></button>
        <button class="sq" aria-label="Рядом"><svg class="w16" viewBox="0 0 16 16"><path d="M1 2h6v5H1zM9 2h6v5H9zM1 10h6v5H1zM9 10h6v5H9z" fill="#fff" stroke="#445"/><path d="M1 2h6M9 2h6M1 10h6M9 10h6" stroke="#445" stroke-width="2"/></svg></button>
        <button class="sq" aria-label="Список"><i class="up dark"></i></button>
        <a href="#">Моя главная стран...</a><a href="#">cm_a_zatoch.iam</a><a href="#">pm_150.iam</a><a href="#" class="on">hi_pro_5aii.iam <svg viewBox="0 0 10 10"><path d="M1 1h2l2 2 2-2h2v2L7 5l2 2v2H7L5 7 3 9H1V7l2-2-2-2z" fill="#fff" stroke="#778"/></svg></a>
      </div>
    </section>
  </main>
  <footer class="status"><span class="msg">Режим ожидания</span><span class="n1c">5</span><span class="n2c">14</span></footer>
</div>
</div>
</body>
</html>
```
FILE: styles.css
```css
* { box-sizing: border-box; }
html, body { height: 100%; margin: 0; }
body { font: 12px/16px Roboto, "Noto Sans", sans-serif; color: #2b2b2b; overflow: hidden; }
button { font: inherit; color: inherit; background: none; border: 0; padding: 0; margin: 0; white-space: nowrap; }
a { color: inherit; text-decoration: none; white-space: nowrap; }
svg { flex: none; display: block; overflow: visible; }
.defs { position: absolute; width: 0; height: 0; }
.w16 { width: 16px; height: 16px; }
.w32 { width: 30px; height: 30px; }
.desktop { height: 100%; padding-right: 5px; background: linear-gradient(#16190f 0, #2c3018 30%, #0c0a06 46%, #8a7420 50%, #17130a 54%, #0d0b07 80%, #45421a 93%, #14100c 100%); }
.app { height: 100%; display: flex; flex-direction: column; background: #f0f0f0; }

.dn { width: 0; height: 0; flex: none; border: 3px solid transparent; border-top: 4px solid #444; border-bottom: 0; }
.dn.white { border-top-color: #fff; }
.dn.wide { border-width: 4px 4px 0; }
.dn.light { border-top-color: #ccc; }
.dn.pale { border-top-color: #999; }
.up { width: 0; height: 0; border: 3px solid transparent; border-bottom: 3px solid #333; border-top: 0; }
.up.dark { border-width: 0 5px 5px; }
.rt { width: 0; height: 0; border: 4px solid transparent; border-left: 5px solid #333; border-right: 0; }
.vs { width: 1px; height: 18px; background: #8b8b8b; }

.titlebar { height: 24px; display: flex; flex: none; background: linear-gradient(90deg, #9cc8f2 640px, #b9dcfb 780px, #b4d8f8 1060px, #7fa6d4 1110px, #6f9fd8 1250px, #86b6e8 1340px, #a9c8e8 1780px, #9bb5d0 1800px); border-bottom: 1px solid #5c6b78; }
.appbtn { width: 41px; height: 42px; flex: none; position: relative; z-index: 2; background: linear-gradient(#8d8d8d, #5a5a5a 60%, #8a8a8a); border: 1px solid #111; display: grid; grid-template-columns: 30px 8px; align-items: center; font-size: 9px; line-height: 9px; color: #111; }
.appbtn .logo { width: 20px; height: 26px; margin: 2px auto 0; }
.appbtn span { grid-row: 2; grid-column: 1; padding-left: 4px; }
.qat { width: 599px; flex: none; display: flex; align-items: center; gap: 7px; padding-left: 9px; background: linear-gradient(#6a6a6a, #8c8c8c 40%, #6b6b6b); }
.qat .w16 + .dn { margin-right: 1px; }
.qat .vs { margin: 0 1px; }
.combo { display: block; position: relative; }
.combo select { width: 100%; height: 100%; appearance: none; font: inherit; color: inherit; background: #fff; border: 0; border-radius: 0; padding: 0 4px; }
.combo::after { content: ""; position: absolute; right: 3px; top: 50%; margin-top: -2px; border: 4px solid transparent; border-top-color: #333; border-bottom: 0; }
.combo.dim { width: 99px; height: 21px; font-style: italic; font-size: 13px; color: #8d8d8d; margin: 0 -3px; }
.combo.dim select { background: #e2e2e2; }
.wheelbox { height: 21px; padding: 2px 3px; margin: 0 -2px 0 -4px; background: #666; }
.fx { font: italic 15px/16px "Liberation Serif", serif; color: #111; width: 16px; white-space: nowrap; margin: 0 2px; }
.fx sub { font-size: 10px; }
.dn.over { border-width: 4px 4px 0; border-top-color: #333; }
.caption { flex: 1; display: flex; gap: 12px; justify-content: center; align-items: center; color: #111; white-space: nowrap; }
.infocenter { width: 457px; flex: none; display: flex; align-items: center; gap: 7px; padding-left: 4px; background: linear-gradient(#6a6a6a, #8f8f8f 40%, #6b6b6b); color: #111; }
.search { width: 178px; height: 20px; border: 0; background: #fff; margin-right: -3px; }
.signin { margin-left: -3px; }
.signdn { margin-left: auto; }
.help { width: 16px; height: 16px; border-radius: 8px; background: #eef2fb; color: #2747a5; border: 1px solid #444; font-weight: 700; line-height: 14px; }
.infocenter .dn:last-child { margin-right: 4px; }
.winbtns { width: 145px; flex: none; display: flex; justify-content: flex-end; align-items: flex-start; padding-right: 2px; }
.winbtns button { height: 18px; width: 28px; border: 1px solid #4c6074; border-top: 0; background: linear-gradient(#c7d6e6, #8faac6); display: grid; place-items: center; }
.winbtns button:first-child { border-bottom-left-radius: 5px; }
.winbtns .close { width: 48px; background: linear-gradient(#e2a08f, #c4391f 50%, #d9694a); border-bottom-right-radius: 5px; }

.tabs { height: 18px; flex: none; display: flex; align-items: center; padding-left: 45px; background: #404040; color: #f2f2f2; }
.tabs a { padding: 0 9px; line-height: 18px; }
.tabs .on { background: linear-gradient(#dcdcdc, #fff); color: #222; height: 17px; align-self: flex-end; line-height: 17px; border-radius: 2px 2px 0 0; margin: 0 1px; }
.mini { width: 14px; height: 8px; margin: 0 6px 0 25px; border-radius: 2px; background: #eee; display: grid; place-items: center; }

.ribbon { height: 95px; flex: none; display: flex; border-bottom: 2px solid #8c8c8c; background: #fff; }
.panel { flex: none; display: flex; flex-direction: column; border-right: 2px solid #b5b5b5; }
.panel h2 { margin: 0; height: 18px; background: #eee; border-top: 1px solid #d0d0d0; font: inherit; line-height: 17px; display: flex; justify-content: center; align-items: center; gap: 6px; }
.big-dn { border-width: 5px 4px 0; }
.tools { flex: 1; display: grid; padding-top: 3px; }
.p1 { width: 252px; }
.p1 .tools { grid-template-columns: 85px 1fr; }
.p2 { width: 724px; }
.p2 .tools { grid-template-columns: 134px 134px 148px 120px 1fr; }
.p3 { width: 460px; }
.p3 .tools { grid-template-columns: 126px 56px 116px 70px 1fr; }
.p4 { width: 366px; border-right: 1px solid #999; }
.p4 .tools { grid-template-columns: 110px 142px 1fr; }
.rest { flex: 1; background: linear-gradient(#d2d2d2, #929292); }
.big { display: flex; flex-direction: column; align-items: center; align-self: start; position: relative; padding-top: 4px; line-height: 15px; }
.big .w32 { margin-bottom: 5px; }
.big .dn { margin-top: 2px; }
.big .dn.side { position: absolute; right: 3px; top: 50px; }
.big.sep { border-left: 1px solid #ccc; height: 72px; }
.col { display: flex; flex-direction: column; align-items: flex-start; }
.col button { height: 24px; display: flex; align-items: center; gap: 5px; }
.col button .dn { margin-left: 3px; }
.col button:disabled { color: #adadad; }
.cw { padding-left: 10px; }
.c5, .n1 { border-left: 1px solid #ccc; padding-left: 10px; height: 72px; }
.lights { width: 132px; height: 22px; margin-left: -4px; border: 1px solid #c4c4c4; }
.lights select { background: #f4f4f4; }

.work { flex: 1; display: flex; min-height: 0; }
.browser { width: 287px; flex: none; display: flex; flex-direction: column; padding: 2px 3px 28px; font: 11px/18px "DejaVu Sans Condensed", "DejaVu Sans", sans-serif; color: #111; }
.grip { height: 13px; display: flex; align-items: center; gap: 5px; }
.grip i { flex: 1; height: 6px; border: 1px solid #aaa; border-left: 0; }
.grip button { margin-right: 1px; }
.grip svg { width: 8px; height: 8px; }
.bhead { height: 21px; background: #ababab; color: #fff; font-weight: 700; font-size: 12px; display: flex; align-items: center; gap: 4px; padding: 0 4px 0 8px; }
.qm { margin-left: auto; width: 13px; height: 14px; background: #ffffd8; border: 1px solid #333; color: #111; font-weight: 700; line-height: 12px; }
.btools { height: 27px; display: flex; align-items: center; padding: 0 4px; font-size: 12px; }
.btools .vs { margin: 0 13px 0 6px; }
.btools .vname { margin: 0 12px 0 3px; }
.btools .dn { margin-right: 7px; }
.tree { flex: 1; margin: 0; padding: 1px 0 0; list-style: none; background: #fff; border: 1px solid #666; }
.tree li { height: 18px; display: flex; align-items: center; gap: 3px; padding-left: 24px; position: relative; white-space: nowrap; background: linear-gradient(#999, #999) 8px 0 / 1px 18px no-repeat, linear-gradient(#999, #999) 9px 9px / 11px 1px no-repeat; }
.tree .root { padding-left: 5px; font-weight: 700; background: none; }
.tree .last { background: linear-gradient(#999, #999) 8px 0 / 1px 9px no-repeat, linear-gradient(#999, #999) 8px 9px / 12px 1px no-repeat; }
.plus::before { content: "+"; position: absolute; left: 4px; top: 5px; width: 9px; height: 9px; border: 1px solid #888; background: #fff; font: 9px/7px "DejaVu Sans", sans-serif; text-align: center; }

.doc { flex: 1; min-width: 0; display: flex; flex-direction: column; border-left: 2px solid #888; }
.canvas { flex: 1; min-height: 0; position: relative; background: #fff; border-bottom: 1px solid #ccc; }
.model { position: absolute; inset: 0; width: 100%; height: 100%; }
.ln { stroke: #1f3a20; stroke-width: 3; stroke-linejoin: round; }
.pipeo { fill: none; stroke: #2b5210; stroke-width: 27; }
.pipei { fill: none; stroke: #74c026; stroke-width: 21; }
.plate { font: 700 49px "Liberation Sans", sans-serif; fill: #17202c; }
.plate .two { font: 46px "Liberation Mono", monospace; fill: #e8ecf4; }
.ax { font: 36px "Liberation Sans", sans-serif; }
.docbtns { position: absolute; right: 2px; top: 6px; display: flex; gap: 8px; }
.docbtns svg { width: 12px; height: 12px; }
.viewcube { position: absolute; right: 14px; top: 46px; width: 80px; height: 84px; }
.cubeT { font: 14px "Open Sans", sans-serif; fill: #999; }
.cubeS { font: 9px "Open Sans", sans-serif; fill: #999; }
.cubeX { font: 7px "Open Sans", sans-serif; fill: #aaa; }
.navbar { position: absolute; right: 2px; top: 145px; width: 35px; height: 198px; border: 2px solid #bdbdbd; border-radius: 5px; background: #f4f4f4; display: flex; flex-direction: column; align-items: center; justify-content: space-between; padding: 3px 0; }
.navbar .w16 { opacity: .6; }
.navbar .wheel { width: 22px; height: 22px; margin-top: 2px; }
.navbar hr { width: 26px; height: 1px; margin: 0; border: 0; background: #bbb; }
.tiny { width: 8px; height: 8px; }
.end { align-self: flex-end; margin-right: 4px; }

.doctabs { height: 21px; flex: none; display: flex; border-top: 1px solid #777; background: linear-gradient(#d6d6d6, #b4b4b4); margin-left: -2px; font: 11px/18px "DejaVu Sans Condensed", "DejaVu Sans", sans-serif; color: #111; }
.sq { width: 20px; border: 1px solid #555; border-left: 0; background: linear-gradient(#f4f4f6, #c8c8cc); display: grid; place-items: center; }
.doctabs a { height: 17px; line-height: 17px; padding: 0 11px; border: 1px solid #777; border-top: 0; border-left: 0; border-radius: 0 0 6px 6px; }
.doctabs .on { background: #fff; display: flex; gap: 6px; height: 18px; padding: 0 9px; }
.doctabs .on svg { width: 10px; height: 10px; margin-top: 2px; }
.status { height: 21px; flex: none; display: flex; align-items: stretch; line-height: 25px; background: linear-gradient(#fff, #c4c4c4); border-top: 1px solid #999; color: #111; overflow: hidden; }
.msg { flex: 1; padding-left: 1px; font: 11px/25px "DejaVu Sans Condensed", "DejaVu Sans", sans-serif; }
.n1c, .n2c { width: 40px; border-left: 1px solid #bbb; padding-left: 8px; }
.n2c { width: 38px; }
```
